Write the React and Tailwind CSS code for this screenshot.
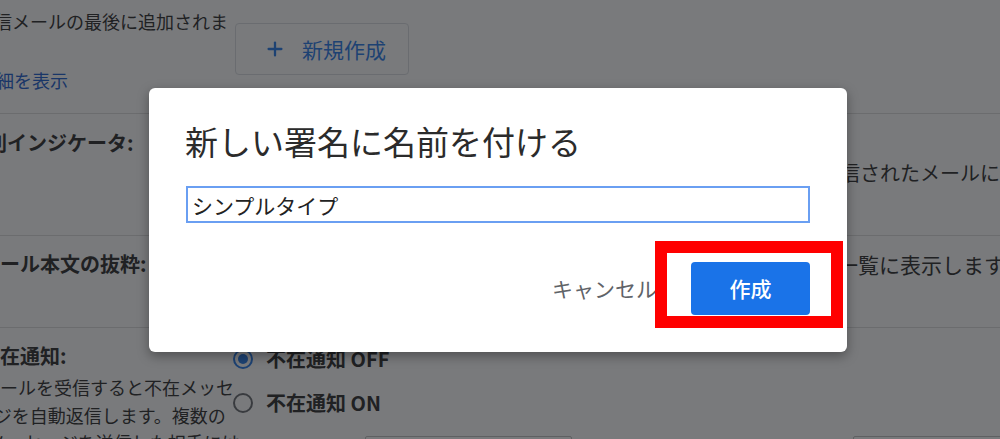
import { Plus } from "lucide-react"

const font = { fontFamily: '"Noto Sans CJK JP", "Noto Sans", sans-serif' }

const Divider = () => <div className="h-px bg-[#dcdcdc]" />

const Radio = ({ checked, label }) => (
  <div className="flex items-center h-[44px]">
    {checked ? (
      <span className="w-[20px] h-[20px] rounded-full border-2 border-[#1a73e8] flex items-center justify-center">
        <span className="w-[10px] h-[10px] rounded-full bg-[#1a73e8]" />
      </span>
    ) : (
      <span className="w-[20px] h-[20px] rounded-full border-2 border-[#5f6368]" />
    )}
    <span className="ml-[13px] text-[20px] leading-[28px] font-bold text-[#222] whitespace-nowrap">{label}</span>
  </div>
)

export default function App() {
  return (
    <div className="relative w-[1000px] h-[439px] overflow-hidden bg-white" style={font}>
      {/* settings page behind the dialog */}
      <div className="flex flex-col text-[#222]">
        <div className="flex h-[113px]">
          <div className="w-[233px] shrink-0 whitespace-nowrap">
            <div className="-ml-[24px] mt-[7px] text-[18px] leading-[28px]">送信メールの最後に追加されま</div>
            <div className="-ml-[22px] mt-[31px] text-[18px] leading-[28px] text-[#1155cc]">詳細を表示</div>
          </div>
          <div className="flex-1">
            <button className="mt-[23px] ml-[2px] w-[174px] h-[52px] rounded-[4px] border border-[#dadce0] flex items-center pl-[28px] gap-[16px] text-[#1a73e8]">
              <Plus size={22} strokeWidth={2.5} />
              <span className="text-[21px] leading-none">新規作成</span>
            </button>
          </div>
        </div>
        <Divider />
        <div className="flex h-[121px]">
          <div className="w-[233px] shrink-0 whitespace-nowrap">
            <div className="-ml-[73px] mt-[15px] text-[20px] leading-[28px] font-bold">送信者別インジケータ:</div>
          </div>
          <div className="flex-1 whitespace-nowrap">
            <div className="ml-[587px] mt-[45px] text-[20px] leading-[28px]">送信されたメールに</div>
          </div>
        </div>
        <Divider />
        <div className="flex h-[91px]">
          <div className="w-[233px] shrink-0 whitespace-nowrap">
            <div className="-ml-[20px] mt-[14px] text-[20px] leading-[28px] font-bold">メール本文の抜粋:</div>
          </div>
          <div className="flex-1 whitespace-nowrap">
            <div className="ml-[604px] mt-[14px] text-[21px] leading-[28px]">一覧に表示します</div>
          </div>
        </div>
        <Divider />
        <div className="flex">
          <div className="w-[233px] shrink-0 whitespace-nowrap">
            <div className="-ml-[20px] mt-[14px] text-[20px] leading-[28px] font-bold">不在通知:</div>
            <div className="mt-[4px] text-[18px] leading-[27.5px]">
              <div className="-ml-[18px]">メールを受信すると不在メッセ</div>
              <div className="-ml-[24px]">ージを自動返信します。複数の</div>
              <div className="-ml-[12px]">メッセージを送信した相手には</div>
            </div>
          </div>
          <div className="flex-1">
            <div className="mt-[9px]">
              <Radio checked label="不在通知 OFF" />
              <Radio label="不在通知 ON" />
            </div>
            <div className="flex mt-[11px]">
              <div className="ml-[132px] w-[207px] h-[36px] border border-[#bdbdbd] rounded-[2px]" />
              <div className="ml-[281px] w-[200px] h-[36px] border border-[#bdbdbd] rounded-[2px]" />
            </div>
          </div>
        </div>
      </div>

      {/* scrim */}
      <div className="absolute inset-0 bg-[rgba(32,33,36,0.6)]" />

      {/* dialog */}
      <div className="absolute left-[149px] top-[88px] w-[698px] bg-white rounded-[6px] shadow-[0_4px_12px_rgba(0,0,0,0.35)] px-[37px] pt-[33px] pb-[37px]">
        <h2 className="text-[33px] leading-[40px] text-[#2b2b2b] -ml-[1px]">新しい署名に名前を付ける</h2>
        <input
          className="mt-[25px] w-full h-[37px] border-2 border-[#6a9ff2] px-[4px] text-[21px] text-[#222] outline-none"
          style={font}
          defaultValue="シンプルタイプ"
        />
        <div className="flex items-center justify-end mt-[39px]">
          <span className="text-[21px] text-[#5f6368] mr-[34px]">キャンセル</span>
          <button className="w-[119px] h-[53px] rounded-[4px] bg-[#1a73e8] text-white text-[21px] font-medium">作成</button>
        </div>
        {/* red highlight frame */}
        <div className="absolute left-[506px] top-[153px] w-[188px] h-[87px] border-[12px] border-[#ff0000]" />
      </div>
    </div>
  )
}
